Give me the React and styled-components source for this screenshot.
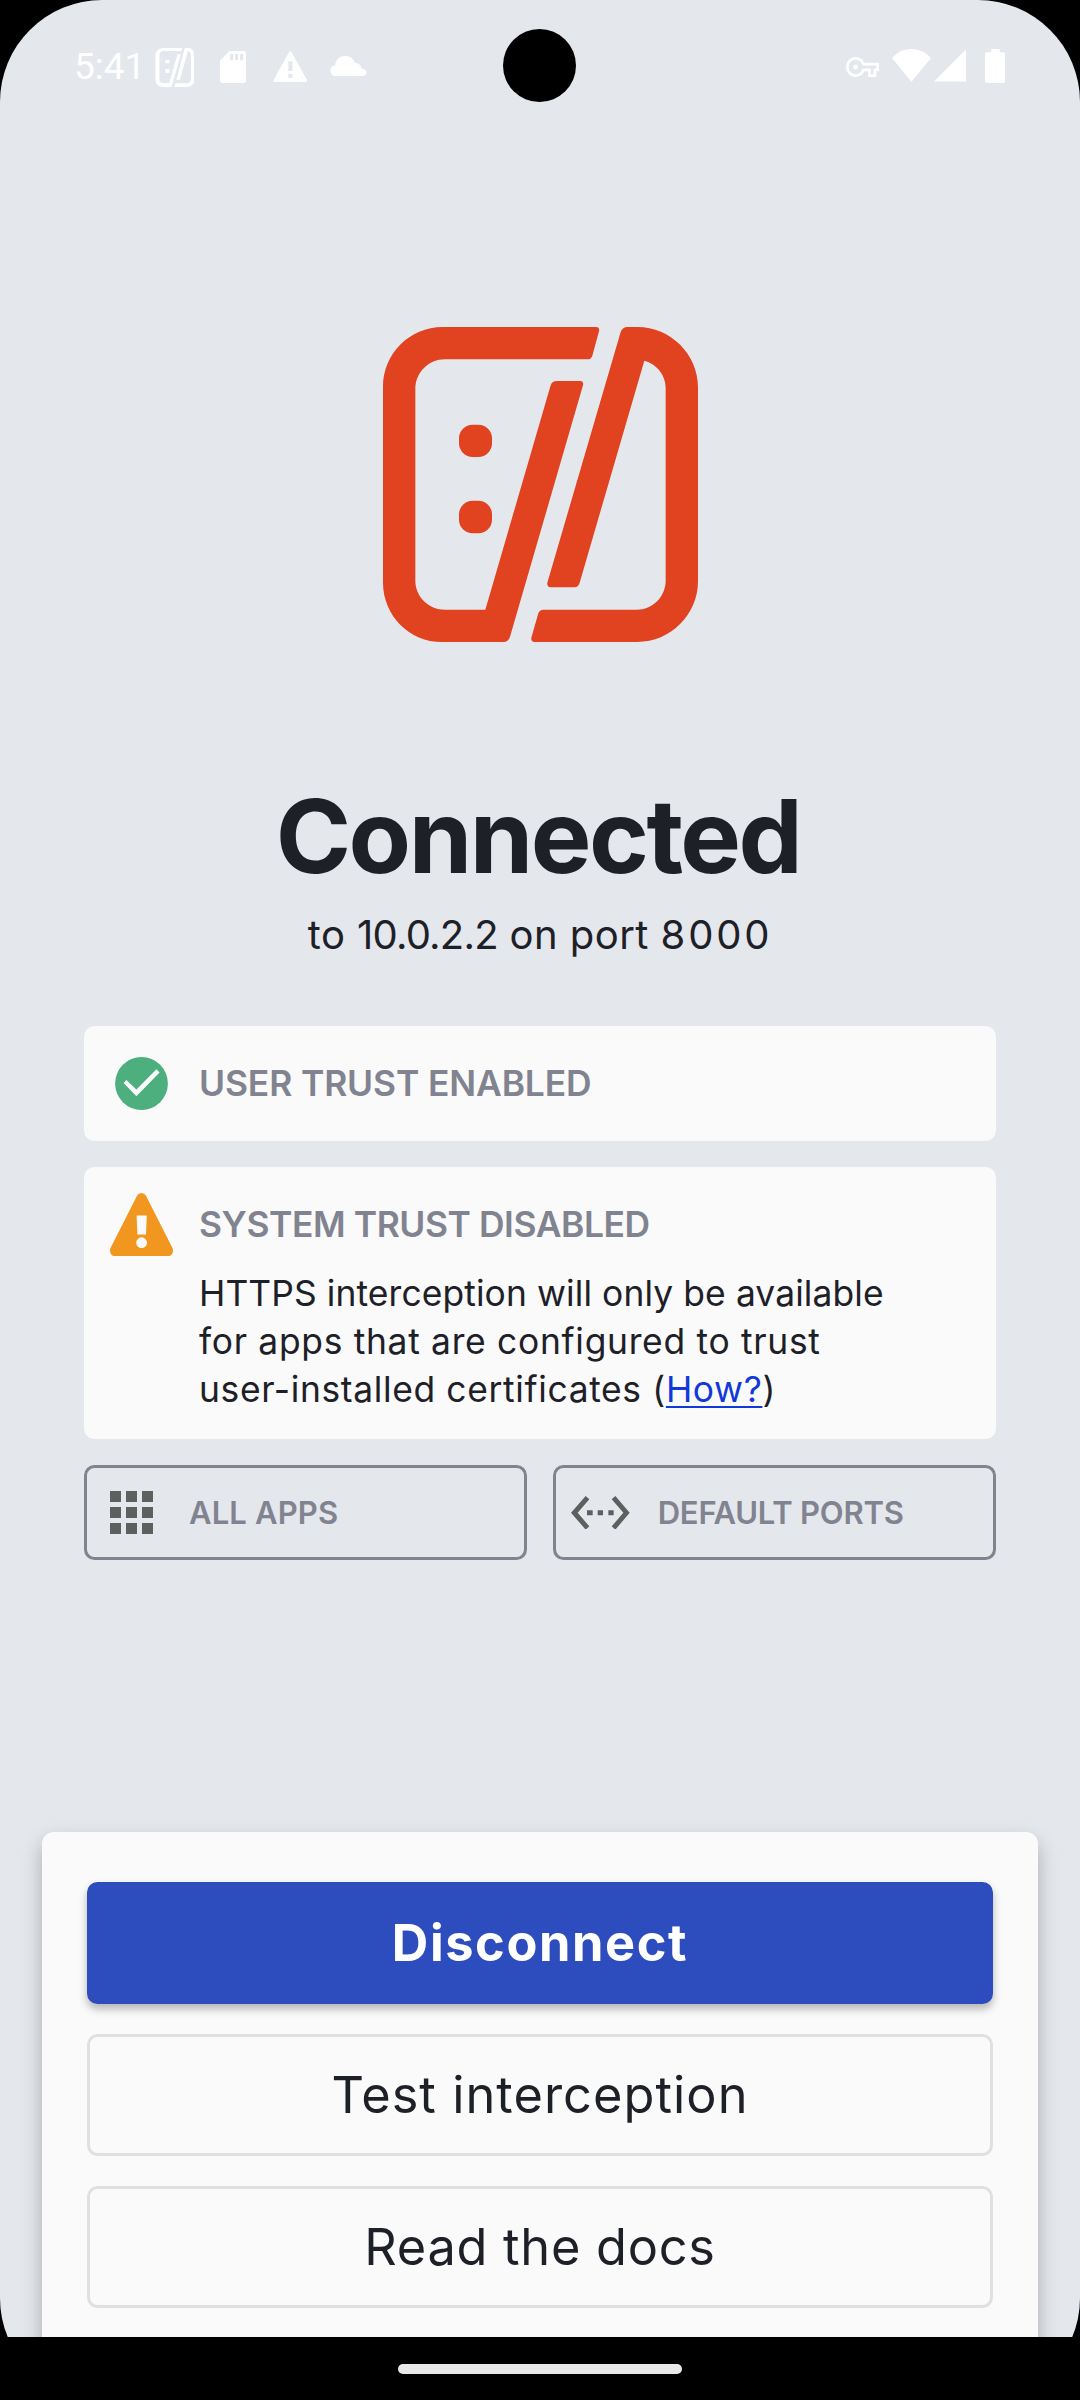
import React from "react";
import styled, { createGlobalStyle } from "styled-components";

const colors = {
  background: "#e4e7ec",
  surface: "#fafafa",
  text: "#1e2028",
  muted: "#818490",
  brand: "#e1421f",
  primary: "#2d4cbd",
  success: "#4caf7d",
  warning: "#f1971f",
  link: "#1138d8",
  outline: "#e0e0e0",
  icon: "#5e6060",
};

const GlobalStyle = createGlobalStyle`
  *, *::before, *::after { box-sizing: border-box; }
  body {
    margin: 0;
    background: #000;
    color: ${colors.text};
    font-family: Inter, "Liberation Sans", sans-serif;
  }
`;

const Device = styled.div`
  width: 1080px;
  height: 2400px;
  overflow: hidden;
  background: #000;
`;

const Display = styled.div`
  position: relative;
  display: flex;
  flex-direction: column;
  height: 2400px;
  padding-bottom: 63px;
  overflow: hidden;
  border-radius: 102px;
  background: ${colors.background};
`;

const StatusBar = styled.header`
  display: flex;
  justify-content: space-between;
  flex: none;
  height: 131px;
  padding: 0 75px 0 74px;
  color: #fff;
`;

const StatusGroup = styled.div`
  display: flex;
  align-items: center;
`;

const Clock = styled.span`
  width: 80.6px;
  margin-top: 2px;
  font-family: Roboto, sans-serif;
  font-size: 37px;
  line-height: 44px;
`;

const Glyph = styled.svg`
  flex: none;
  display: block;
  width: ${(p) => p.$w}px;
  height: ${(p) => p.$h}px;
  margin-left: ${(p) => p.$gap || 0}px;
  margin-top: ${(p) => p.$drop || 0}px;
  fill: currentColor;
`;

const Camera = styled.div`
  position: absolute;
  top: 29px;
  left: 503px;
  width: 73px;
  height: 73px;
  border-radius: 50%;
  background: #000;
`;

const Main = styled.main`
  flex: 1;
  min-height: 0;
  display: flex;
  flex-direction: column;
  padding-top: 196px;
`;

const Logo = styled.svg`
  flex: none;
  align-self: center;
  width: 315px;
  height: 315px;
  margin-left: 1px;
  fill: ${colors.brand};
`;

const Title = styled.h1`
  margin: 134px 0 0;
  padding-right: 4px;
  font-size: 102px;
  font-weight: 650;
  line-height: 120px;
  letter-spacing: -2.5px;
  text-align: center;
`;

const Subtitle = styled.p`
  margin: 13px 0 0;
  font-size: 40px;
  line-height: 52px;
  letter-spacing: 0.47px;
  text-align: center;
`;

const Figure = styled.span`
  letter-spacing: ${(p) => p.$track}px;
`;

const StatusList = styled.section`
  display: flex;
  flex-direction: column;
  gap: 26px;
  margin: 65px 84px 0;
`;

const TrustCard = styled.article`
  display: grid;
  grid-template-columns: 115px 1fr;
  height: ${(p) => p.$height}px;
  border-radius: 10.5px;
  background: ${colors.surface};
`;

const IconCell = styled.div`
  display: flex;
  align-items: center;
  justify-content: center;
  height: 115px;
`;

const CardBody = styled.div`
  display: flex;
  flex-direction: column;
`;

const CardTitle = styled.h2`
  margin: 0;
  color: ${colors.muted};
  font-size: 35.4px;
  font-weight: 600;
  line-height: 115px;
  letter-spacing: ${(p) => p.$track}px;
  white-space: nowrap;
`;

const Detail = styled.p`
  margin: -12px 0 0;
  font-size: 35.4px;
  line-height: 48px;
`;

const Line = styled.span`
  display: block;
  letter-spacing: ${(p) => p.$track}px;
  white-space: nowrap;
`;

const Link = styled.a`
  color: ${colors.link};
  text-decoration: underline;
  text-decoration-thickness: 2px;
  text-underline-offset: 4px;
  text-decoration-skip-ink: none;
`;

const ChipRow = styled.div`
  display: grid;
  grid-template-columns: 1fr 1fr;
  gap: 26px;
`;

const Chip = styled.button`
  display: flex;
  align-items: center;
  height: 95px;
  padding: 0 0 0 ${(p) => p.$inset}px;
  border: 3px solid ${colors.muted};
  border-radius: 10.5px;
  background: transparent;
  color: ${colors.icon};
  font-family: inherit;
`;

const ChipLabel = styled.span`
  margin-left: ${(p) => p.$gap}px;
  color: ${colors.muted};
  font-size: 31px;
  font-weight: 600;
  line-height: 40px;
  letter-spacing: ${(p) => p.$track}px;
  white-space: nowrap;
`;

const ActionPanel = styled.section`
  flex: 1;
  display: flex;
  flex-direction: column;
  gap: 30px;
  margin: 272px 42px -40px;
  padding: 50px 45px 0;
  border-radius: 12px;
  background: ${colors.surface};
  box-shadow: 0 10px 20px rgba(0, 0, 0, 0.26);
`;

const Action = styled.button`
  flex: none;
  height: 122px;
  padding: 0;
  border: 3px solid ${(p) => (p.$primary ? colors.primary : colors.outline)};
  border-radius: 10.5px;
  background: ${(p) => (p.$primary ? colors.primary : "transparent")};
  box-shadow: ${(p) => (p.$primary ? "0 5px 9px rgba(0, 0, 0, 0.28)" : "none")};
  color: ${(p) => (p.$primary ? "#fff" : colors.text)};
  font-family: inherit;
  font-size: 50.5px;
  font-weight: ${(p) => (p.$primary ? 700 : 400)};
  letter-spacing: ${(p) => p.$track}px;
  line-height: 60px;
`;

const NavBar = styled.footer`
  position: relative;
  display: flex;
  justify-content: center;
  height: 63px;
  margin-top: -63px;
  padding-top: 27px;
  background: #000;
`;

const HomeHandle = styled.div`
  width: 284px;
  height: 10px;
  border-radius: 5px;
  background: #e9e9e9;
`;

function StatusGlyph({ box, d, ...rest }) {
  return (
    <Glyph viewBox={box} preserveAspectRatio="none" aria-hidden="true" {...rest}>
      <path fillRule="evenodd" d={d} />
    </Glyph>
  );
}

function BrandLogo() {
  return (
    <Logo viewBox="69 81 945 945" aria-hidden="true">
      <path d="M248 81H708Q720 82 717 94L697 167Q693 178 683 178H255C206 178 166 218 166 267V842C166 890 206 929 255 929H376L572 256Q576 244 588 243H660Q672 244 669 256L450 1010Q445 1024 433 1026H246C148 1026 69 946 69 848V260C69 161 149 81 248 81Z" />
      <path d="M800 81H832C932 81 1014 163 1014 263V844C1014 944 932 1026 832 1026H524Q512 1024 514 1013L535 940Q539 929 550 929H830C878 929 917 890 917 842V264C917 225 890 192 853 182L659 848Q655 861 644 862H572Q560 860 562 848L782 96Q787 83 800 81Z" />
      <rect x="297" y="374" width="99" height="97" rx="41" />
      <rect x="297" y="602" width="99" height="98" rx="41" />
    </Logo>
  );
}

export default function App() {
  return (
    <Device>
      <GlobalStyle />
      <Display>
        <StatusBar>
          <StatusGroup>
            <Clock>5:41</Clock>
            <StatusGlyph
              $w={39.4}
              $h={39}
              $drop={4}
              box="449 144 114 117"
              d="M528 144H474C459 144 450 154 450 170V237C450 253 459 261 474 261H497L524 163H514L490 249H474C466 249 462 246 462 237V170C462 158 466 153 474 153H525ZM545 144H538Q535 144 534 148L511 240H521L544 153C550 154 553 160 553 168V237C553 246 548 250 540 250H508L505 261H540C555 261 563 252 563 237V168C563 153 557 144 545 144ZM481 179h8q2 0 2 2v7q0 2-2 2h-8q-2 0-2-2v-7q0-2 2-2ZM481 207h8q2 0 2 2v8q0 2-2 2h-8q-2 0-2-2v-8q0-2 2-2Z"
            />
            <StatusGlyph
              $w={26}
              $h={32}
              $gap={26}
              $drop={3}
              box="639 153 75 96"
              d="M667 153H707Q714 153 714 161V241Q714 249 707 249H646Q639 249 639 241V181ZM668 162V181H677V162ZM683 162V181H691V162ZM697 162V181H705V162Z"
            />
            <StatusGlyph
              $w={34.5}
              $h={31}
              $gap={27.3}
              $drop={1.5}
              box="794 152 101 93"
              d="M841 155Q844 150 848 155L894 240Q895 245 890 245H799Q794 245 795 240ZM839 183V212H851V183ZM839 220V233H851V220Z"
            />
            <StatusGlyph
              $w={36.5}
              $h={20}
              $gap={22.5}
              box="960 167 106 60"
              d="M976 227C967 227 961 219 961 211C961 202 967 196 975 195C976 178 988 167 1004 167C1018 167 1029 175 1032 188C1042 187 1050 194 1052 205C1061 206 1066 210 1066 216C1066 223 1061 227 1054 227Z"
            />
          </StatusGroup>
          <StatusGroup>
            <StatusGlyph
              $w={33}
              $h={20}
              $drop={3}
              box="0 5 24 14"
              d="M22 19h-6v-4h-2.68c-1.14 2.42-3.6 4-6.32 4-3.86 0-7-3.14-7-7s3.14-7 7-7c2.72 0 5.17 1.58 6.32 4H24v6h-2v4zm-4-2h2v-4h2v-2H11.94l-.23-.67C11.01 8.34 9.11 7 7 7c-2.76 0-5 2.24-5 5s2.24 5 5 5c2.11 0 4.01-1.34 4.71-3.33l.23-.67H18v4zM7 13.8c-1 0-1.8-.8-1.8-1.8s.8-1.8 1.8-1.8 1.8.8 1.8 1.8-.8 1.8-1.8 1.8z"
            />
            <StatusGlyph $w={39} $h={32.7} $gap={13} box="1019 147 114 98" d="M1019 174Q1042 147 1076 147Q1110 147 1133 174L1076 245Z" />
            <StatusGlyph $w={32.4} $h={32.4} $gap={3.3} box="1143 148 94 97" d="M1143 245L1237 148V245Z" />
            <StatusGlyph
              $w={20.3}
              $h={34}
              $gap={18.5}
              $drop={1}
              box="1292 147 58 102"
              d="M1310 147h24v10h10q6 0 6 6v80q0 6-6 6h-46q-6 0-6-6v-80q0-6 6-6h12z"
            />
          </StatusGroup>
        </StatusBar>
        <Camera />

        <Main>
          <BrandLogo />
          <Title>Connected</Title>
          <Subtitle>
            to <Figure $track={-0.8}>10.0.2.2</Figure> on port <Figure $track={2.8}>8000</Figure>
          </Subtitle>

          <StatusList>
            <TrustCard $height={115}>
              <IconCell>
                <Glyph $w={53} $h={53} viewBox="0 0 53 53">
                  <circle cx="26.5" cy="26.5" r="26.4" fill={colors.success} />
                  <path d="M8.6 26L11.4 22.9L21.4 32.6L41.4 12.3L44.6 15.4L21.4 39.3Z" fill={colors.surface} />
                </Glyph>
              </IconCell>
              <CardTitle $track={-0.12}>USER TRUST ENABLED</CardTitle>
            </TrustCard>

            <TrustCard $height={272}>
              <IconCell>
                <Glyph $w={63} $h={63.5} viewBox="0 0 63 63.5">
                  <path
                    d="M27 2.8Q28.6 0 31.5 0Q34.4 0 36 2.8L62.2 54.5C64.5 59 61.5 63.5 57 63.5H6C1.5 63.5-1.5 59 .8 54.5Z"
                    fill={colors.warning}
                  />
                  <path d="M26.6 22.5H36.8L36 41.6H27.4Z" fill={colors.surface} />
                  <circle cx="31.6" cy="49.7" r="5.4" fill={colors.surface} />
                </Glyph>
              </IconCell>
              <CardBody>
                <CardTitle $track={-0.42}>SYSTEM TRUST DISABLED</CardTitle>
                <Detail>
                  <Line $track={0.1}>HTTPS interception will only be available</Line>
                  <Line $track={0.7}>for apps that are configured to trust</Line>
                  <Line $track={0.65}>
                    user-installed certificates (<Link>How?</Link>)
                  </Line>
                </Detail>
              </CardBody>
            </TrustCard>

            <ChipRow>
              <Chip $inset={23}>
                <Glyph $w={43} $h={43} viewBox="0 0 43 43">
                  <path d="M0 0h11v11H0zM16 0h11v11H16zM32 0h11v11H32zM0 16h11v11H0zM16 16h11v11H16zM32 16h11v11H32zM0 32h11v11H0zM16 32h11v11H16zM32 32h11v11H32z" />
                </Glyph>
                <ChipLabel $gap={36} $track={0.14}>ALL APPS</ChipLabel>
              </Chip>
              <Chip $inset={15}>
                <Glyph $w={58.7} $h={33.7} viewBox="123 377 176 101">
                  <path d="M123 427L167 377L178 387L143 427L178 468L167 478ZM299 427L256 377L245 387L280 427L245 468L256 478ZM171 420h17v15h-17zM203 420h16v15h-16zM235 420h16v15h-16z" />
                </Glyph>
                <ChipLabel $gap={28} $track={-0.23}>DEFAULT PORTS</ChipLabel>
              </Chip>
            </ChipRow>
          </StatusList>

          <ActionPanel>
            <Action $primary $track={1.6}>Disconnect</Action>
            <Action $track={1.05}>Test interception</Action>
            <Action $track={0.73}>Read the docs</Action>
          </ActionPanel>
        </Main>
      </Display>
      <NavBar>
        <HomeHandle />
      </NavBar>
    </Device>
  );
}
